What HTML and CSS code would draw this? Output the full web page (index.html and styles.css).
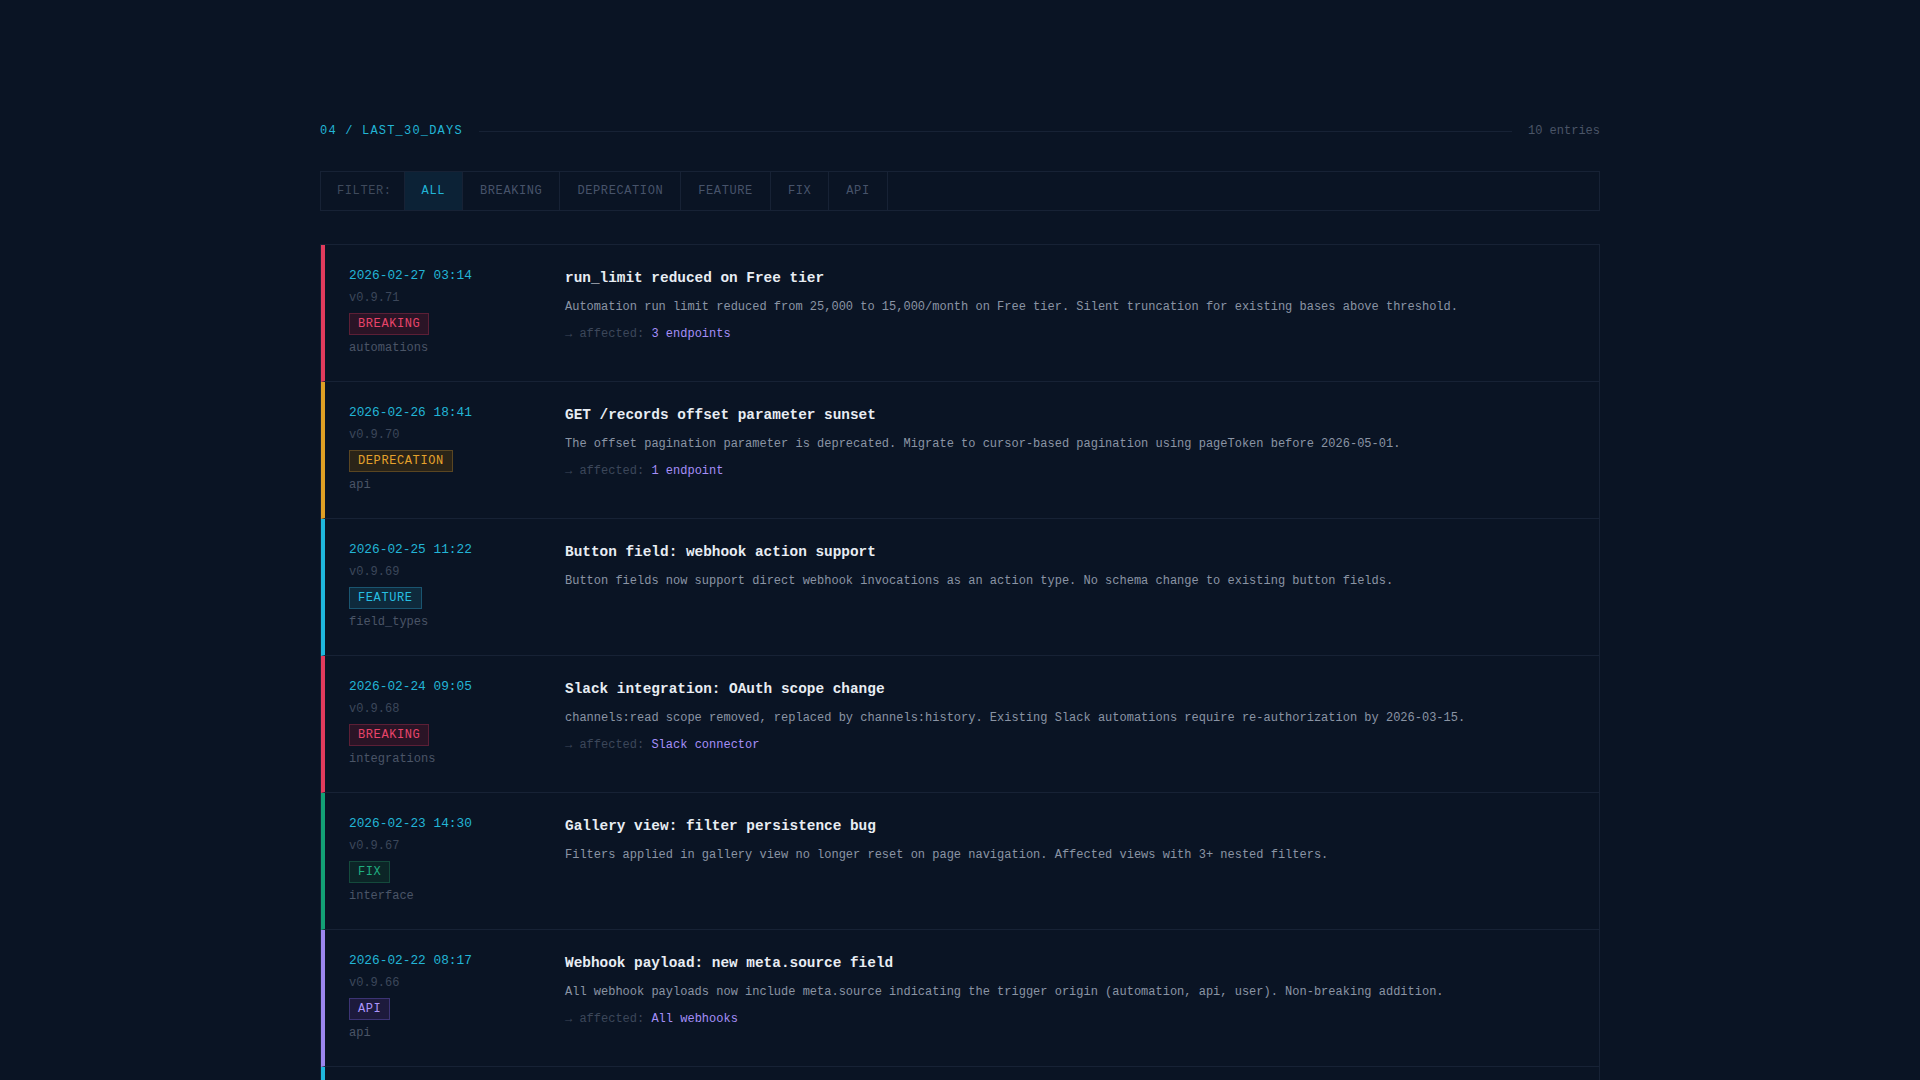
FILE: index.html
```html
<!DOCTYPE html>
<html lang="en">
<head>
<meta charset="utf-8">
<title>Changelog</title>
<link rel="stylesheet" href="styles.css">
</head>
<body>
<main class="page">
  <header class="section-head">
    <span class="section-title">04 / LAST_30_DAYS</span>
    <span class="section-rule"></span>
    <span class="section-count">10 entries</span>
  </header>

  <nav class="filters">
    <span class="filter-label">FILTER:</span>
    <button class="tab active">ALL</button>
    <button class="tab">BREAKING</button>
    <button class="tab">DEPRECATION</button>
    <button class="tab">FEATURE</button>
    <button class="tab">FIX</button>
    <button class="tab">API</button>
  </nav>

  <section class="log">
    <article class="entry breaking">
      <div class="meta">
        <div class="date">2026-02-27 03:14</div>
        <div class="version">v0.9.71</div>
        <div><span class="badge">BREAKING</span></div>
        <div class="area">automations</div>
      </div>
      <div class="body">
        <h3 class="title">run_limit reduced on Free tier</h3>
        <p class="desc">Automation run limit reduced from 25,000 to 15,000/month on Free tier. Silent truncation for existing bases above threshold.</p>
        <p class="affected"><span class="arrow">→</span> affected: <span class="target">3 endpoints</span></p>
      </div>
    </article>

    <article class="entry deprecation">
      <div class="meta">
        <div class="date">2026-02-26 18:41</div>
        <div class="version">v0.9.70</div>
        <div><span class="badge">DEPRECATION</span></div>
        <div class="area">api</div>
      </div>
      <div class="body">
        <h3 class="title">GET /records offset parameter sunset</h3>
        <p class="desc">The offset pagination parameter is deprecated. Migrate to cursor-based pagination using pageToken before 2026-05-01.</p>
        <p class="affected"><span class="arrow">→</span> affected: <span class="target">1 endpoint</span></p>
      </div>
    </article>

    <article class="entry feature">
      <div class="meta">
        <div class="date">2026-02-25 11:22</div>
        <div class="version">v0.9.69</div>
        <div><span class="badge">FEATURE</span></div>
        <div class="area">field_types</div>
      </div>
      <div class="body">
        <h3 class="title">Button field: webhook action support</h3>
        <p class="desc">Button fields now support direct webhook invocations as an action type. No schema change to existing button fields.</p>
      </div>
    </article>

    <article class="entry breaking">
      <div class="meta">
        <div class="date">2026-02-24 09:05</div>
        <div class="version">v0.9.68</div>
        <div><span class="badge">BREAKING</span></div>
        <div class="area">integrations</div>
      </div>
      <div class="body">
        <h3 class="title">Slack integration: OAuth scope change</h3>
        <p class="desc">channels:read scope removed, replaced by channels:history. Existing Slack automations require re-authorization by 2026-03-15.</p>
        <p class="affected"><span class="arrow">→</span> affected: <span class="target">Slack connector</span></p>
      </div>
    </article>

    <article class="entry fix">
      <div class="meta">
        <div class="date">2026-02-23 14:30</div>
        <div class="version">v0.9.67</div>
        <div><span class="badge">FIX</span></div>
        <div class="area">interface</div>
      </div>
      <div class="body">
        <h3 class="title">Gallery view: filter persistence bug</h3>
        <p class="desc">Filters applied in gallery view no longer reset on page navigation. Affected views with 3+ nested filters.</p>
      </div>
    </article>

    <article class="entry api">
      <div class="meta">
        <div class="date">2026-02-22 08:17</div>
        <div class="version">v0.9.66</div>
        <div><span class="badge">API</span></div>
        <div class="area">api</div>
      </div>
      <div class="body">
        <h3 class="title">Webhook payload: new meta.source field</h3>
        <p class="desc">All webhook payloads now include meta.source indicating the trigger origin (automation, api, user). Non-breaking addition.</p>
        <p class="affected"><span class="arrow">→</span> affected: <span class="target">All webhooks</span></p>
      </div>
    </article>

    <article class="entry feature">
      <div class="meta">
        <div class="date">2026-02-20 16:02</div>
        <div class="version">v0.9.65</div>
        <div><span class="badge">FEATURE</span></div>
        <div class="area">views</div>
      </div>
      <div class="body">
        <h3 class="title">Timeline view: grouping by linked record</h3>
        <p class="desc">Timeline views can now be grouped by a linked record field. Existing views are unaffected.</p>
      </div>
    </article>

    <article class="entry fix">
      <div class="meta">
        <div class="date">2026-02-18 10:44</div>
        <div class="version">v0.9.64</div>
        <div><span class="badge">FIX</span></div>
        <div class="area">formulas</div>
      </div>
      <div class="body">
        <h3 class="title">DATETIME_DIFF rounding correction</h3>
        <p class="desc">DATETIME_DIFF now rounds toward zero for negative intervals, matching documented behaviour.</p>
      </div>
    </article>

    <article class="entry deprecation">
      <div class="meta">
        <div class="date">2026-02-15 07:30</div>
        <div class="version">v0.9.63</div>
        <div><span class="badge">DEPRECATION</span></div>
        <div class="area">api</div>
      </div>
      <div class="body">
        <h3 class="title">Legacy API key auth sunset</h3>
        <p class="desc">API keys are deprecated in favour of personal access tokens. Keys stop working after 2026-06-01.</p>
        <p class="affected"><span class="arrow">→</span> affected: <span class="target">All endpoints</span></p>
      </div>
    </article>

    <article class="entry api">
      <div class="meta">
        <div class="date">2026-02-12 12:05</div>
        <div class="version">v0.9.62</div>
        <div><span class="badge">API</span></div>
        <div class="area">api</div>
      </div>
      <div class="body">
        <h3 class="title">List records: returnFieldsByFieldId option</h3>
        <p class="desc">List records accepts returnFieldsByFieldId to key response fields by ID instead of name.</p>
        <p class="affected"><span class="arrow">→</span> affected: <span class="target">2 endpoints</span></p>
      </div>
    </article>
  </section>
</main>
</body>
</html>
```

FILE: styles.css
```css
* { box-sizing: border-box; }

html, body {
  margin: 0;
  padding: 0;
  background: #0a1424;
}

body {
  font-family: "Liberation Mono", "DejaVu Sans Mono", monospace;
  font-size: 12px;
  color: #8b95a5;
}

.page {
  width: 1280px;
  margin: 0 auto;
  padding-top: 121px;
  padding-bottom: 80px;
}

/* header */
.section-head {
  display: flex;
  align-items: center;
  gap: 16px;
  height: 20px;
}

.section-title {
  color: #22b5d6;
  font-size: 12px;
  letter-spacing: 0.1em;
  line-height: 20px;
}

.section-rule {
  flex: 1;
  height: 1px;
  background: #172235;
}

.section-count {
  color: #4a5567;
  font-size: 12px;
  line-height: 20px;
}

/* filters */
.filters {
  display: flex;
  align-items: stretch;
  height: 40px;
  margin-top: 30px;
  border: 1px solid #172235;
  background: #0a1424;
}

.filter-label {
  display: flex;
  align-items: center;
  padding: 0 12px 0 16px;
  color: #3f4a5c;
  letter-spacing: 0.05em;
  border-right: 1px solid #172235;
}

.tab {
  font: inherit;
  font-size: 12px;
  letter-spacing: 0.05em;
  background: transparent;
  color: #47536a;
  border: 0;
  border-right: 1px solid #172235;
  padding: 0 17px;
  margin: 0;
  cursor: pointer;
}

.tab.active {
  background: #0c2236;
  color: #22b5d6;
}

/* log */
.log {
  margin-top: 33px;
  border: 1px solid #172235;
}

.entry {
  display: grid;
  grid-template-columns: 176px 1fr;
  column-gap: 40px;
  padding: 20px 24px 24px 24px;
  border-left: 4px solid transparent;
  border-bottom: 1px solid #172235;
}

.entry:last-child { border-bottom: 0; }

.entry.breaking { border-left-color: #e23b5c; }
.entry.deprecation { border-left-color: #e0a024; }
.entry.feature { border-left-color: #1fb8de; }
.entry.fix { border-left-color: #13a175; }
.entry.api { border-left-color: #9c86ee; }

.meta {
  display: flex;
  flex-direction: column;
  align-items: flex-start;
  padding-top: 1px;
}

.date {
  color: #22b5d6;
  font-size: 12.8px;
  line-height: 19px;
}

.version {
  color: #3c475a;
  line-height: 18px;
  margin-top: 4px;
}

.badge {
  display: inline-block;
  margin-top: 6px;
  padding: 3px 8px;
  line-height: 14px;
  font-size: 12px;
  letter-spacing: 0.05em;
  border: 1px solid;
}

.entry.breaking .badge { color: #e8446a; background: #2a1426; border-color: #5c1f36; }
.entry.deprecation .badge { color: #e6a22c; background: #2a2418; border-color: #5a4622; }
.entry.feature .badge { color: #27bfe2; background: #0e2a3c; border-color: #1a5570; }
.entry.fix .badge { color: #1fae80; background: #0c2527; border-color: #144a3c; }
.entry.api .badge { color: #ac94fb; background: #1d1a3c; border-color: #3c3474; }

.area {
  color: #4a5567;
  line-height: 18px;
  margin-top: 4px;
}

.body { padding-top: 2px; }

.title {
  margin: 0;
  color: #e8edf3;
  font-size: 14.4px;
  font-weight: bold;
  line-height: 22px;
}

.desc {
  margin: 9px 0 0;
  color: #8a94a4;
  line-height: 18px;
}

.affected {
  margin: 9px 0 0;
  color: #3c475a;
  line-height: 18px;
}

.arrow {
  font-size: 12px;
}

.target {
  color: #a58ff8;
}
```
